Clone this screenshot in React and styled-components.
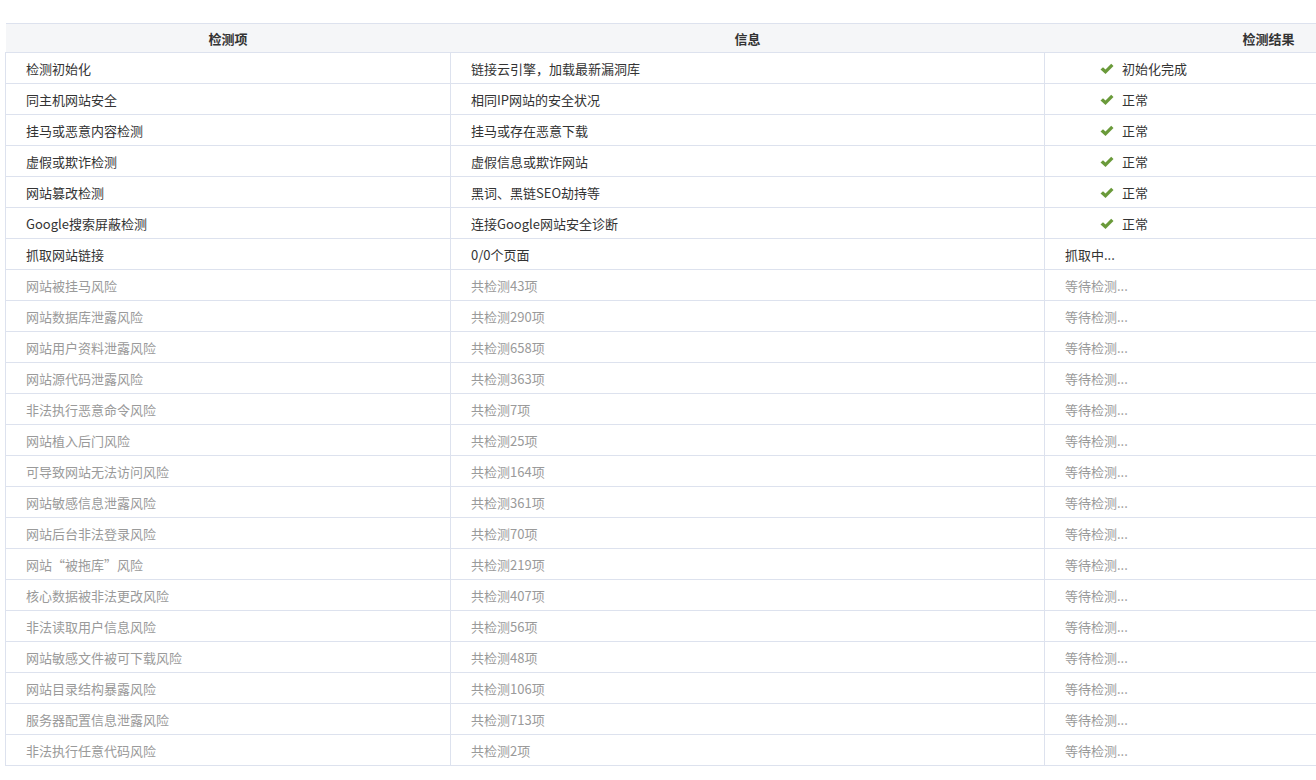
import React from "react";
import styled, { createGlobalStyle } from "styled-components";

const Global = createGlobalStyle`
  html, body { margin: 0; overflow: hidden; background: #fff; }
  body { font-family: "Noto Sans CJK SC", "Noto Sans", sans-serif; font-size: 13px; }
`;

const Wrap = styled.div`
  padding: 23px 0 0 5px;
  width: 1311px;
  overflow: hidden;
`;

const Table = styled.table`
  width: 1487px;
  border-collapse: collapse;
  table-layout: fixed;
`;

const Th = styled.th`
  height: 28px;
  padding: 0;
  background: #f5f6f8;
  border-top: 1px solid #dde2ee;
  border-bottom: 1px solid #dde2ee;
  font-weight: bold;
  color: #333;
  font-size: 13px;
  text-align: center;
`;

const Td = styled.td`
  height: 30px;
  padding: 0 0 0 ${p => (p.$indent ? 55 : 20)}px;
  border: 1px solid #dde2ee;
  border-top: none;
  color: ${p => (p.$muted ? "#9a9a9a" : "#333")};
  white-space: nowrap;
`;

const Check = styled.svg`
  width: 14px;
  height: 12px;
  vertical-align: -1px;
  margin-right: 8px;
`;

const CheckIcon = () => (
  <Check viewBox="0 0 14 12">
    <path d="M0.5 6.5 L3 4.2 L5.5 6.6 L11.2 0.8 L13.5 3 L5.5 11 Z" fill="#6a9a3a" />
  </Check>
);

const done = [
  ["检测初始化", "链接云引擎，加载最新漏洞库", "初始化完成"],
  ["同主机网站安全", "相同IP网站的安全状况", "正常"],
  ["挂马或恶意内容检测", "挂马或存在恶意下载", "正常"],
  ["虚假或欺诈检测", "虚假信息或欺诈网站", "正常"],
  ["网站篡改检测", "黑词、黑链SEO劫持等", "正常"],
  ["Google搜索屏蔽检测", "连接Google网站安全诊断", "正常"],
];

const pending = [
  ["网站被挂马风险", 43], ["网站数据库泄露风险", 290], ["网站用户资料泄露风险", 658],
  ["网站源代码泄露风险", 363], ["非法执行恶意命令风险", 7], ["网站植入后门风险", 25],
  ["可导致网站无法访问风险", 164], ["网站敏感信息泄露风险", 361], ["网站后台非法登录风险", 70],
  ["网站“被拖库”风险", 219], ["核心数据被非法更改风险", 407], ["非法读取用户信息风险", 56],
  ["网站敏感文件被可下载风险", 48], ["网站目录结构暴露风险", 106], ["服务器配置信息泄露风险", 713],
  ["非法执行任意代码风险", 2],
];

export default function App() {
  return (
    <Wrap>
      <Global />
      <Table>
        <colgroup>
          <col style={{ width: 445 }} />
          <col style={{ width: 594 }} />
          <col style={{ width: 448 }} />
        </colgroup>
        <thead>
          <tr><Th>检测项</Th><Th>信息</Th><Th>检测结果</Th></tr>
        </thead>
        <tbody>
          {done.map(r => (
            <tr key={r[0]}>
              <Td>{r[0]}</Td><Td>{r[1]}</Td>
              <Td $indent><CheckIcon />{r[2]}</Td>
            </tr>
          ))}
          <tr><Td>抓取网站链接</Td><Td>0/0个页面</Td><Td>抓取中...</Td></tr>
          {pending.map(([n, c]) => (
            <tr key={n}>
              <Td $muted>{n}</Td><Td $muted>共检测{c}项</Td><Td $muted>等待检测...</Td>
            </tr>
          ))}
        </tbody>
      </Table>
    </Wrap>
  );
}
